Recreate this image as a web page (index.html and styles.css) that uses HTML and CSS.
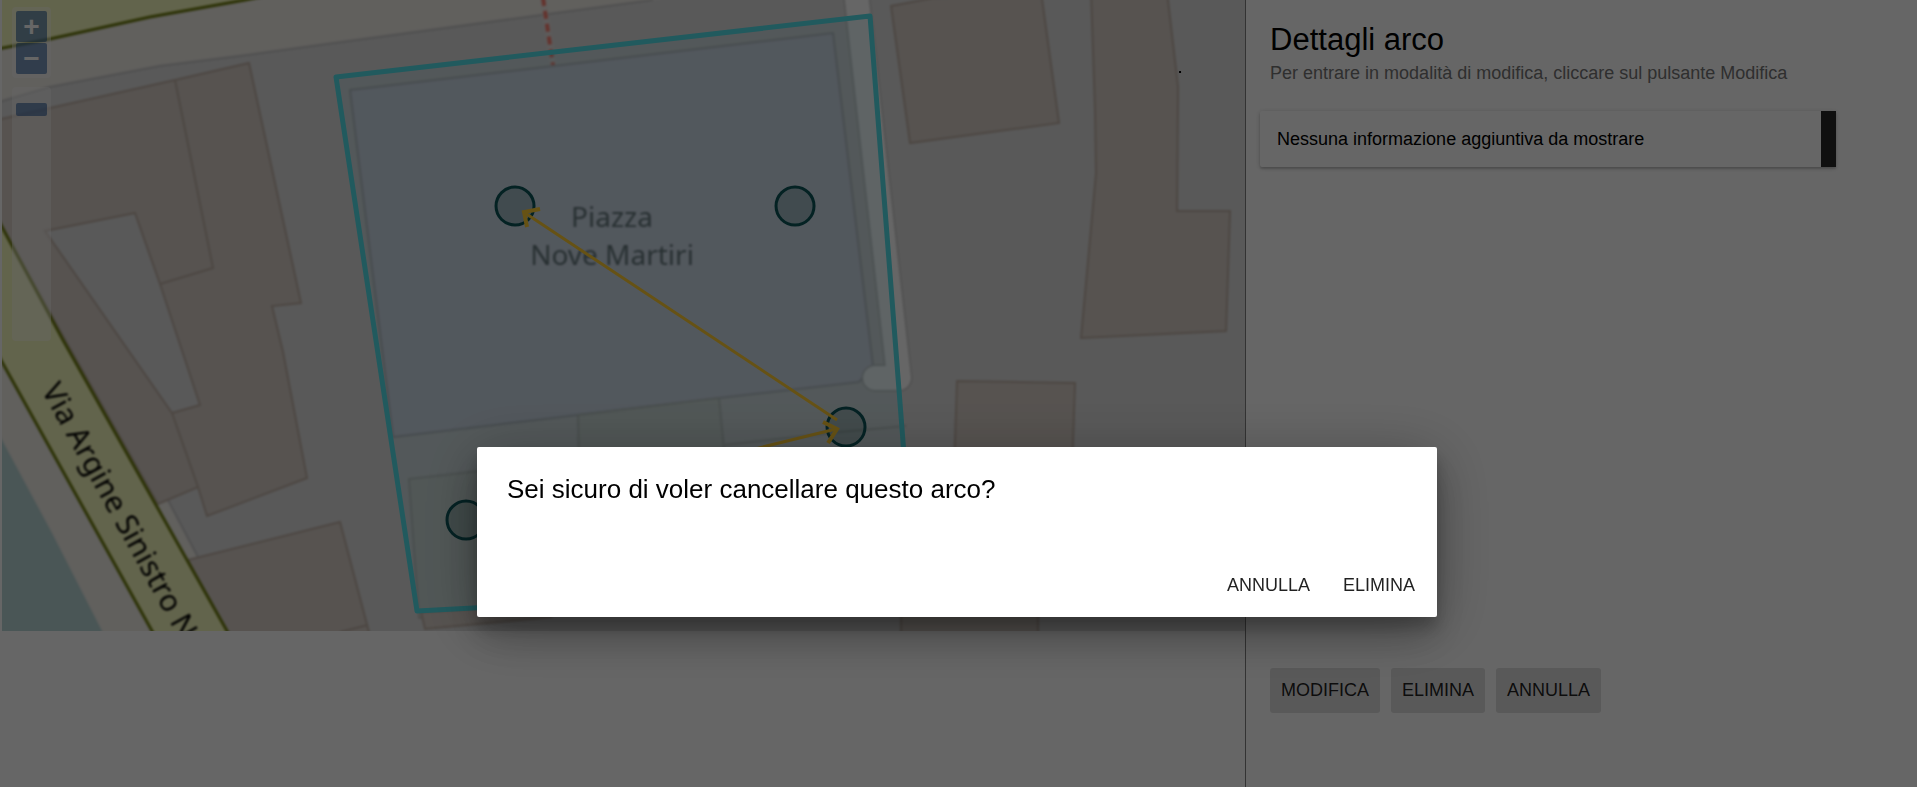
FILE: index.html
```html
<!DOCTYPE html>
<html lang="it">
<head>
<meta charset="utf-8">
<title>Dettagli arco</title>
<link rel="stylesheet" href="styles.css">
</head>
<body>
<main class="layout">
  <section class="map-pane" aria-label="Mappa">
    <div class="map">
      <svg class="map-canvas" viewBox="2 0 1243 631" preserveAspectRatio="xMinYMin slice" aria-hidden="true">
        <g class="tiles">
          <rect class="land" x="-10" y="-10" width="1270" height="660"/>
          <path class="ground" d="M-8 -8H690L653 0L549 14L320 45L240 56L160 66L50 87L-8 104Z"/>
          <path class="ground-edge" d="M653 0L549 14L320 45L240 56L160 66L50 87L-8 104"/>
          <path class="road" d="M-8 -8H280L245 0L150 17L100 28L50 39L-8 50Z"/>
          <path class="road-edge" d="M280 -7L245 0L150 17L100 28L50 39L-8 50"/>
          <path class="ground" d="M157 504L168 500L198 557L186 562Z"/>
          <path class="ground-edge" d="M168 500L198 557"/>
          <path class="building" d="M-8 121L175 80L249 63L301 303L272 306L283 352L307 478L207 516L198 487L158 504L-8 210ZM45 231L172 413L200 405L160 284L135 213Z"/>
          <path class="building-line" d="M175 80L213 268L160 284M172 413L198 487"/>
          <path class="building" d="M188 560L340 522L370 636L230 636Z"/>
          <path class="building-line" d="M340 632L368 625"/>
          <path class="ground" d="M-8 340L152 631L160 640H90L-8 420Z"/>
          <path class="water" d="M-8 421L2 440L52 533L102 631L106 640H-8Z"/>
          <path class="road" d="M-8 208L2 227L63 340L227 631L232 640H157L152 631L2 362L-8 344Z"/>
          <path class="road-edge" d="M-8 208L2 227L63 340L227 631L232 640M157 640L152 631L2 362L-8 344"/>
          <path class="plaza" d="M350 90L833 33L873 366L859 382L719 398L578 415L393 437Z"/>
          <path class="yard" d="M578 415L719 398L725 460H579Z"/>
          <path class="yard" d="M409 479L560 462V612L419 618Z"/>
          <path class="plot-line" d="M725 445L840 432L906 426"/>
          <path class="building" d="M421 612L425 629L551 617V604Z"/>
          <path class="footway-edge" d="M856 -8L899 378H875"/>
          <path class="footway" d="M856 -8L899 378H875"/>
          <path class="building" d="M891 6L933 -2L1041 -8L1059 123L910 143Z"/>
          <path class="building" d="M1091 -8L1095 110L1096 173L1092 217L1081 338L1226 331L1230 211H1177L1178 87L1167 -8Z"/>
          <path class="building" d="M957 381L1075 383L1072 470H954Z"/>
          <path class="building" d="M901 600H1038V640H901Z"/>
          <path class="path-halo" d="M543 -2L553 65"/>
          <path class="path-dash" d="M543 -2L553 65"/>
          <text class="place" x="612" y="227">Piazza</text>
          <text class="place" x="612" y="265">Nove Martiri</text>
          <text class="street" transform="translate(41 390) rotate(61)">Via Argine Sinistro N</text>
        </g>
        <path class="area" d="M336 77L870 16L914 584L417 611Z"/>
        <g class="node">
          <circle cx="515" cy="206" r="19"/>
          <circle cx="795" cy="206" r="19"/>
          <circle cx="846" cy="427" r="19"/>
          <circle cx="466" cy="520" r="19"/>
        </g>
        <path class="arc" d="M837 420L525 213M477 517L836 429"/>
        <path class="arc-head" d="M540 209L524 212L527 227M823 422L837 429L828 443"/>
        <rect x="1179" y="71" width="2" height="2"/>
      </svg>
      <div class="zoom">
        <button type="button" class="zoom-btn" aria-label="Zoom in">+</button>
        <button type="button" class="zoom-btn" aria-label="Zoom out">−</button>
      </div>
      <div class="zoom-slider">
        <input class="zoom-range" type="range" min="0" max="100" value="95" aria-label="Livello di zoom">
      </div>
    </div>
  </section>
  <aside class="details">
    <header>
      <h1 class="details-title">Dettagli arco</h1>
      <p class="details-hint">Per entrare in modalità di modifica, cliccare sul pulsante Modifica</p>
    </header>
    <div class="card"><p>Nessuna informazione aggiuntiva da mostrare</p></div>
    <div class="actions">
      <button type="button" class="btn btn-filled">MODIFICA</button>
      <button type="button" class="btn btn-filled">ELIMINA</button>
      <button type="button" class="btn btn-filled">ANNULLA</button>
    </div>
  </aside>
</main>
<div class="backdrop">
  <div class="dialog" role="dialog" aria-modal="true" aria-labelledby="dialog-title">
    <h2 class="dialog-title" id="dialog-title">Sei sicuro di voler cancellare questo arco?</h2>
    <div class="dialog-actions">
      <button type="button" class="btn">ANNULLA</button>
      <button type="button" class="btn">ELIMINA</button>
    </div>
  </div>
</div>
</body>
</html>
```
FILE: styles.css
```css
* { box-sizing: border-box; }

body {
  margin: 0;
  background: #fff;
  color: #000;
  font: 18px/24px "Liberation Sans", Arial, sans-serif;
}

h1, h2, p { margin: 0; font-weight: 400; }

.layout { display: flex; min-height: 100vh; }

/* Map */
.map-pane { width: 65%; padding-left: 2px; border-right: 1px solid #808080; }
.map { position: relative; aspect-ratio: 1243 / 631; overflow: hidden; }
.map-canvas { display: block; width: 100%; height: 100%; }

.tiles { filter: blur(0.8px); }
.land { fill: #dfdfdf; }
.ground { fill: #f2efe9; }
.ground-edge { fill: none; stroke: #c6c6c6; stroke-width: 2; }
.water { fill: #b8d6d6; }
.road { fill: #f6fabe; }
.road-edge { fill: none; stroke: #6f7d10; stroke-width: 3; }
.building { fill: #d9d0c9; fill-rule: evenodd; stroke: #bfb0a5; stroke-width: 2; }
.building-line { fill: none; stroke: #bfb0a5; stroke-width: 2; }
.plaza { fill: #dddde9; stroke: #bcbcc0; stroke-width: 2; }
.yard { fill: #dadcd6; stroke: #c2c2be; stroke-width: 2; }
.plot-line { fill: none; stroke: #c2c2be; stroke-width: 2; }
.footway, .footway-edge { fill: none; stroke-linecap: round; stroke-linejoin: round; }
.footway { stroke: #fff; stroke-width: 24; }
.footway-edge { stroke: #c4c4c4; stroke-width: 27; }
.path-halo { fill: none; stroke: #f0e6e4; stroke-width: 6; stroke-opacity: 0.6; }
.path-dash { fill: none; stroke: #fa8072; stroke-width: 4; stroke-dasharray: 8 5; }
.place { fill: #666e70; font: 28px "Noto Sans", sans-serif; text-anchor: middle; }
.street { fill: #000; font: 30px "Noto Sans", sans-serif; }

.area { fill: rgba(80, 210, 235, 0.1); stroke: #54e0ea; stroke-width: 5; stroke-linejoin: round; }
.node { fill: rgba(0, 60, 60, 0.2); stroke: #0b5559; stroke-width: 3; }
.arc { fill: none; stroke: #ffcc33; stroke-width: 3; }
.arc-head { fill: none; stroke: #ffcc33; stroke-width: 4; }

.zoom {
  position: absolute;
  top: 7px;
  left: 10px;
  display: grid;
  gap: 1px;
  padding: 4px;
  border-radius: 4px;
  background: rgba(255, 255, 255, 0.4);
}
.zoom-btn {
  width: 31px;
  height: 31px;
  padding: 0;
  border: 0;
  border-radius: 2px;
  background: rgba(0, 60, 136, 0.5);
  color: #fff;
  font: bold 28px/32px "Liberation Sans", Arial, sans-serif;
}

.zoom-slider {
  position: absolute;
  top: 87px;
  left: 10px;
  height: 254px;
  padding: 4px;
  border-radius: 4px;
  background: rgba(255, 255, 255, 0.4);
}
.zoom-range {
  display: block;
  width: 31px;
  height: 100%;
  margin: 0;
  appearance: none;
  background: transparent;
  writing-mode: vertical-lr;
  direction: rtl;
}
.zoom-range::-webkit-slider-thumb {
  appearance: none;
  width: 31px;
  height: 13px;
  border-radius: 2px;
  background: rgba(0, 60, 136, 0.5);
}

/* Details panel */
.details { flex: 1; display: flex; flex-direction: column; padding: 20px 24px 74px; }
.details-title { font-size: 31px; line-height: 40px; }
.details-hint { color: #757575; line-height: 26px; }
.card {
  width: 576px;
  max-width: 100%;
  margin: 25px 0 0 -10px;
  padding: 16px 17px;
  border-right: 15px solid #272727;
  border-radius: 2px 0 0 2px;
  box-shadow: 0 1px 5px rgba(0, 0, 0, 0.2), 0 2px 2px rgba(0, 0, 0, 0.14);
}
.actions { display: flex; gap: 11px; margin-top: auto; }

.btn {
  height: 45px;
  padding: 0 11px;
  border: 0;
  border-radius: 3px;
  background: transparent;
  color: rgba(0, 0, 0, 0.87);
  font: 18px/45px "Liberation Sans", Arial, sans-serif;
}
.btn-filled { background: #dedede; }

/* Dialog */
.backdrop {
  position: fixed;
  inset: 0;
  display: flex;
  flex-direction: column;
  align-items: center;
  justify-content: flex-end;
  padding: 0 3px 170px 0;
  background: rgba(0, 0, 0, 0.6);
}
.dialog {
  width: 960px;
  max-width: 80%;
  padding: 26px 11px 9px;
  border-radius: 2px;
  background: #fff;
  box-shadow: 0 11px 15px rgba(0, 0, 0, 0.2), 0 24px 38px rgba(0, 0, 0, 0.14), 0 9px 60px rgba(0, 0, 0, 0.3);
}
.dialog-title { padding-left: 19px; font-size: 26px; line-height: 32px; }
.dialog-actions { display: flex; justify-content: flex-end; gap: 11px; margin-top: 58px; }
```
